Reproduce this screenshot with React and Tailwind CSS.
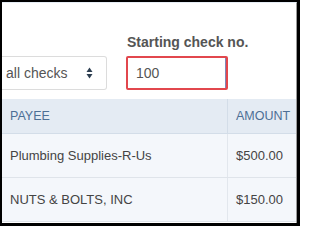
export default function App() {
  const rows = [
    { payee: 'Plumbing Supplies-R-Us', amount: '$500.00' },
    { payee: 'NUTS & BOLTS, INC', amount: '$150.00' },
  ];

  return (
    <div className="w-[300px] h-[226px] bg-black pt-[2px] pl-[2px] pr-[3px] pb-[3px] overflow-hidden">
      <div
        className="w-[295px] h-[221px] bg-white border-t border-t-[#e6edf5] border-r border-r-[#9a9a9a] flex flex-col overflow-hidden"
        style={{ fontFamily: '"Liberation Sans", Arial, sans-serif' }}
      >
        {/* filter controls */}
        <div className="flex items-end mt-[31px] h-[56px]">
          <div className="w-[105px] h-[34px] shrink-0 bg-white border border-l-0 border-[#dcdcdc] rounded-r-[3px] flex items-center justify-between pl-[4px] pr-[13px]">
            <span className="text-[14px] text-[#555]">all checks</span>
            <svg width="7" height="12" viewBox="0 0 7 12">
              <path d="M3.5 0.5 L6.5 5 L0.5 5 Z" fill="#2c3e50" />
              <path d="M3.5 11.5 L6.5 7 L0.5 7 Z" fill="#2c3e50" />
            </svg>
          </div>
          <div className="ml-[19px] flex flex-col">
            <label className="text-[14px] font-bold text-[#555] leading-[16px] mb-[6px] pl-[1px]">Starting check no.</label>
            <div className="w-[102px] h-[34px] border-2 border-[#e2474d] rounded-[2px]">
              <div className="h-full border-r border-r-[#7f86b8] flex items-center pl-[8px] text-[14px] text-[#555]">100</div>
            </div>
          </div>
        </div>

        {/* table */}
        <div className="mt-[9px] text-[13px]">
          <div className="flex h-[35px] bg-[#e4ebf3] border-b border-[#d3dde8] text-[12.5px] text-[#4d6f95]">
            <div className="w-[226px] flex items-center pl-[8px] border-r border-[#d3dde8]">PAYEE</div>
            <div className="flex-1 flex items-center pl-[8px]">AMOUNT</div>
          </div>
          {rows.map((r) => (
            <div key={r.payee} className="flex h-[44px] bg-[#f4f7fb] border-b border-[#dfe4ea] text-[#444]">
              <div className="w-[226px] flex items-center pl-[8px] border-r border-[#e2e7ed]">{r.payee}</div>
              <div className="flex-1 flex items-center pl-[8px]">{r.amount}</div>
            </div>
          ))}
        </div>
      </div>
    </div>
  );
}
